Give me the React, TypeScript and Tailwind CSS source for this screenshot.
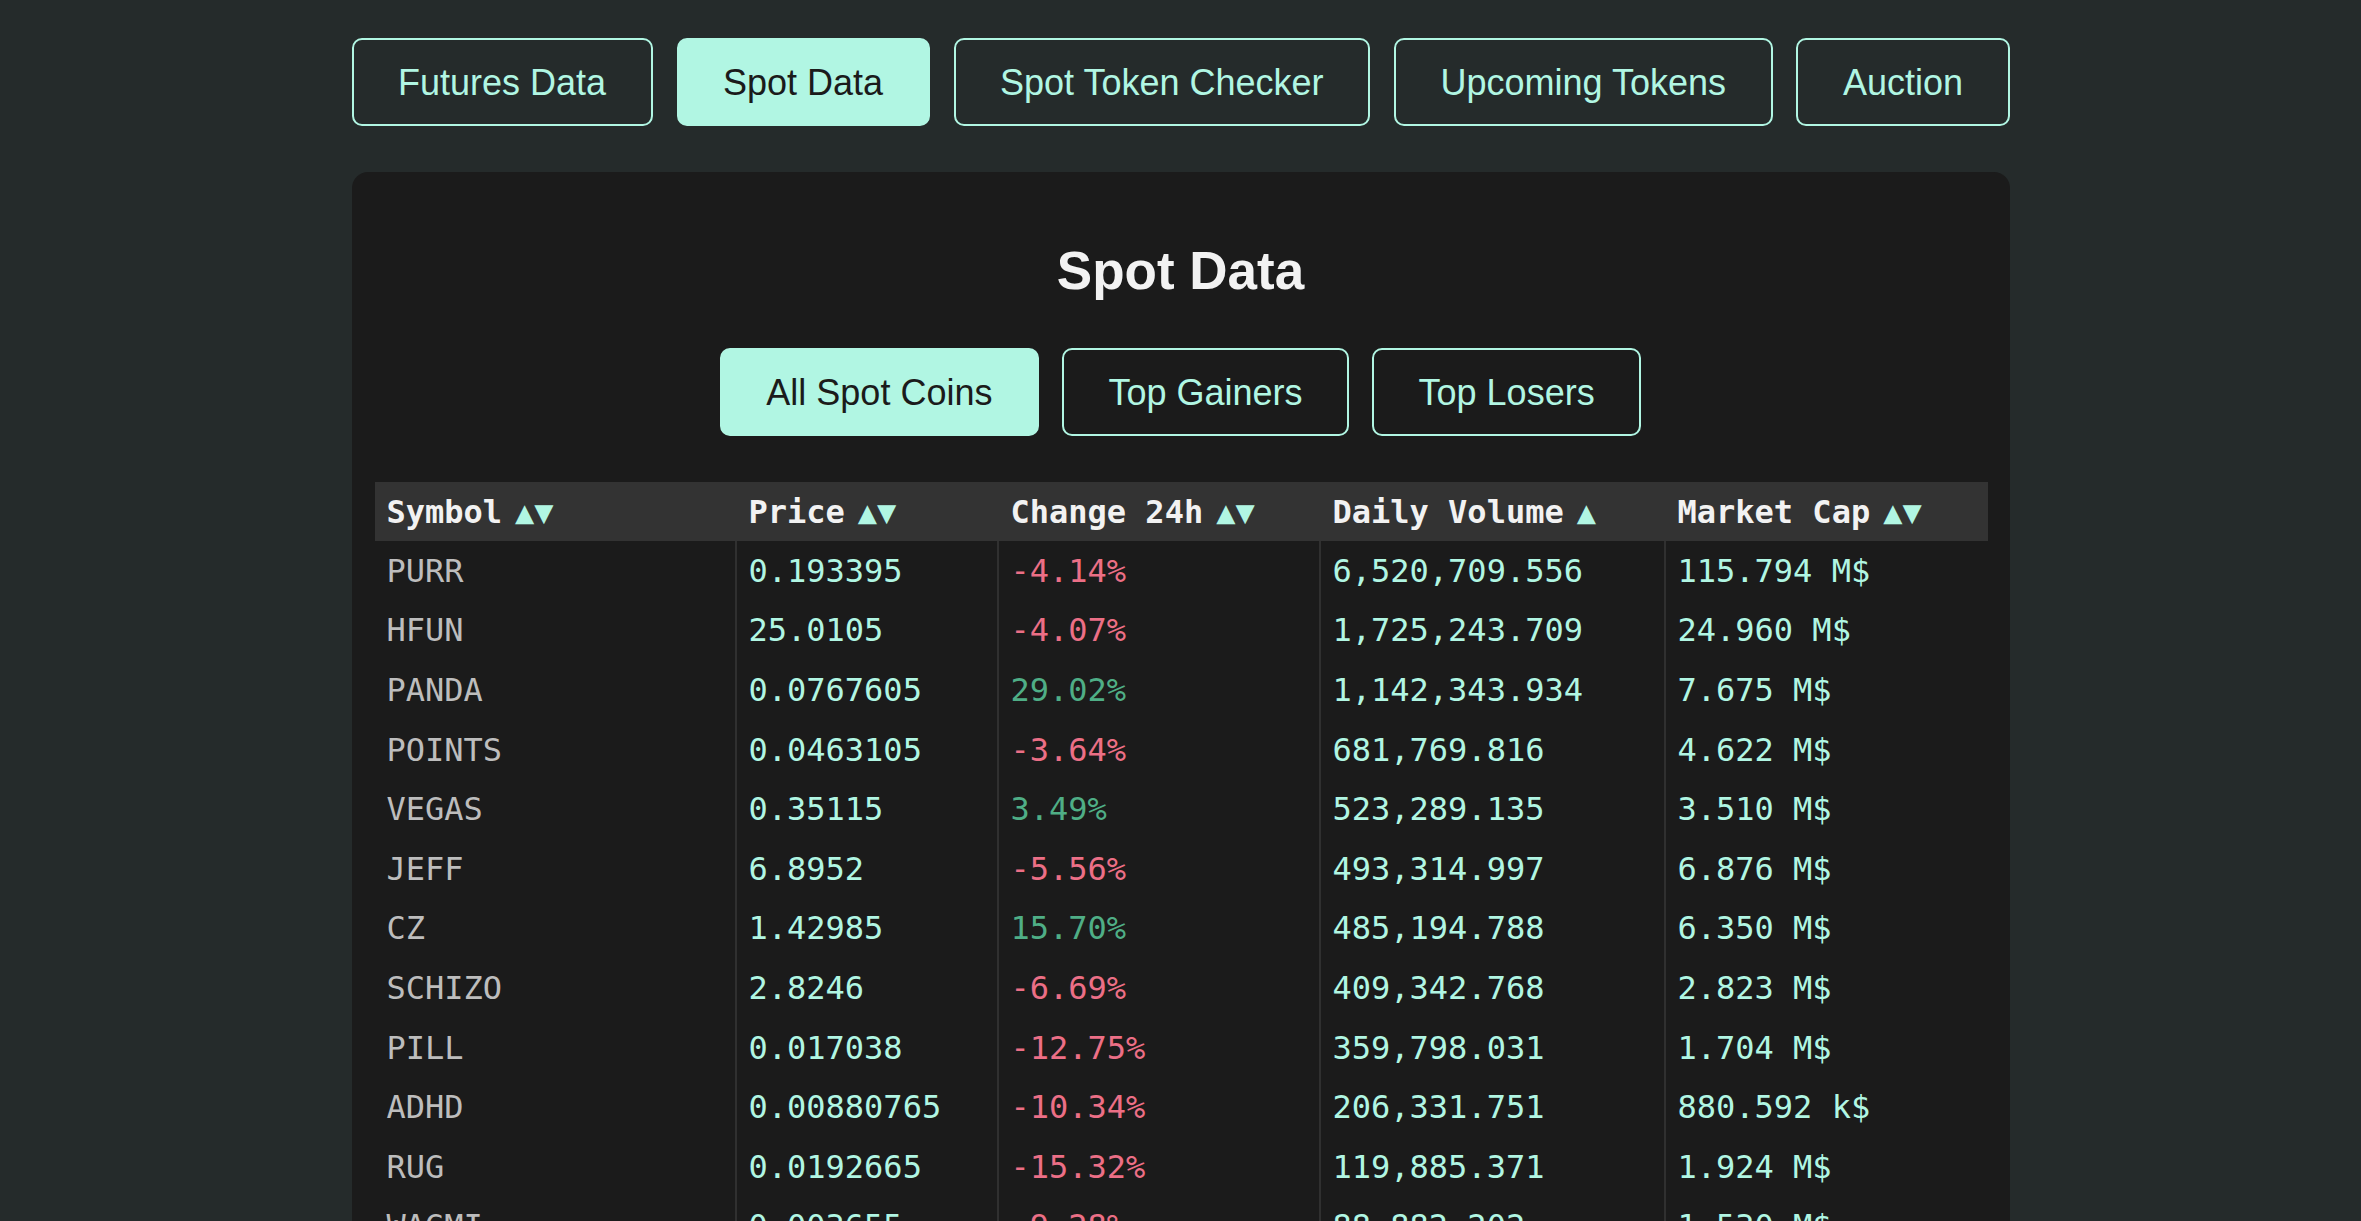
import { useState } from "react";

type Coin = {
  symbol: string;
  price: string;
  change: number;
  volume: string;
  cap: string;
};

const coins: Coin[] = [
  { symbol: "PURR", price: "0.193395", change: -4.14, volume: "6,520,709.556", cap: "115.794 M$" },
  { symbol: "HFUN", price: "25.0105", change: -4.07, volume: "1,725,243.709", cap: "24.960 M$" },
  { symbol: "PANDA", price: "0.0767605", change: 29.02, volume: "1,142,343.934", cap: "7.675 M$" },
  { symbol: "POINTS", price: "0.0463105", change: -3.64, volume: "681,769.816", cap: "4.622 M$" },
  { symbol: "VEGAS", price: "0.35115", change: 3.49, volume: "523,289.135", cap: "3.510 M$" },
  { symbol: "JEFF", price: "6.8952", change: -5.56, volume: "493,314.997", cap: "6.876 M$" },
  { symbol: "CZ", price: "1.42985", change: 15.7, volume: "485,194.788", cap: "6.350 M$" },
  { symbol: "SCHIZO", price: "2.8246", change: -6.69, volume: "409,342.768", cap: "2.823 M$" },
  { symbol: "PILL", price: "0.017038", change: -12.75, volume: "359,798.031", cap: "1.704 M$" },
  { symbol: "ADHD", price: "0.00880765", change: -10.34, volume: "206,331.751", cap: "880.592 k$" },
  { symbol: "RUG", price: "0.0192665", change: -15.32, volume: "119,885.371", cap: "1.924 M$" },
  { symbol: "WAGMI", price: "0.003655", change: -9.28, volume: "88,882.202", cap: "1.530 M$" },
  { symbol: "FRIED", price: "0.0121135", change: -2.81, volume: "71,420.115", cap: "1.211 M$" },
  { symbol: "MOON", price: "0.0581", change: 1.94, volume: "64,210.902", cap: "958.117 k$" },
];

const navItems = ["Futures Data", "Spot Data", "Spot Token Checker", "Upcoming Tokens", "Auction"];
const filters = ["All Spot Coins", "Top Gainers", "Top Losers"];

function PillButton({ label, active, onClick }: { label: string; active: boolean; onClick: () => void }) {
  return (
    <button
      onClick={onClick}
      className={
        active
          ? "h-[88px] px-[44.5px] rounded-[10px] border-2 border-[#b1f6e3] bg-[#b1f6e3] text-[#1b1b1b] text-[36px] leading-[41px]"
          : "h-[88px] px-[44.5px] rounded-[10px] border-2 border-[#b1f6e3] bg-transparent text-[#b1f6e3] text-[36px] leading-[41px]"
      }
    >
      {label}
    </button>
  );
}

function SortHead({ label, arrows }: { label: string; arrows: string }) {
  return (
    <span>
      {label}
      <span className="ml-[13px] text-[#b1f6e3]">{arrows}</span>
    </span>
  );
}

export default function App() {
  const [tab, setTab] = useState("Spot Data");
  const [filter, setFilter] = useState("All Spot Coins");

  const cell = "h-[59.6px] px-[12px] py-0 align-middle whitespace-nowrap";

  return (
    <div className="min-h-screen bg-[#252b2b] font-['Liberation_Sans',Arial,sans-serif]">
      <div className="w-[1658px] mx-auto pt-[38px] pb-10">
        {/* Top navigation */}
        <nav className="flex justify-between">
          {navItems.map((n) => (
            <PillButton key={n} label={n} active={tab === n} onClick={() => setTab(n)} />
          ))}
        </nav>

        {/* Card */}
        <div className="mt-[46px] bg-[#1b1b1b] rounded-[16px] px-[23px] pt-[68px] pb-[23px]">
          <h2 className="text-center text-[53px] leading-[61px] font-bold text-[#f2f2f2]">Spot Data</h2>

          <div className="mt-[47px] flex justify-center gap-[23px]">
            {filters.map((f) => (
              <PillButton key={f} label={f} active={filter === f} onClick={() => setFilter(f)} />
            ))}
          </div>

          <table className="mt-[46px] w-full table-fixed border-collapse font-['DejaVu_Sans_Mono',monospace] text-[32px] leading-[38px]">
            <colgroup>
              <col className="w-[361px]" />
              <col className="w-[262px]" />
              <col className="w-[322px]" />
              <col className="w-[345px]" />
              <col className="w-[323px]" />
            </colgroup>
            <thead>
              <tr className="bg-[#333333] text-[#f2f2f2] text-left">
                <th className={`${cell} font-bold h-[59px]`}>
                  <SortHead label="Symbol" arrows="▲▼" />
                </th>
                <th className={`${cell} font-bold h-[59px] border-l-2 border-[#333333]`}>
                  <SortHead label="Price" arrows="▲▼" />
                </th>
                <th className={`${cell} font-bold h-[59px] border-l-2 border-[#333333]`}>
                  <SortHead label="Change 24h" arrows="▲▼" />
                </th>
                <th className={`${cell} font-bold h-[59px] border-l-2 border-[#333333]`}>
                  <SortHead label="Daily Volume" arrows="▲" />
                </th>
                <th className={`${cell} font-bold h-[59px] border-l-2 border-[#333333]`}>
                  <SortHead label="Market Cap" arrows="▲▼" />
                </th>
              </tr>
            </thead>
            <tbody>
              {coins.map((c) => (
                <tr key={c.symbol}>
                  <td className={`${cell} text-[#bdbdbd]`}>{c.symbol}</td>
                  <td className={`${cell} text-[#b1f6e3] border-l-2 border-[#303030]`}>{c.price}</td>
                  <td
                    className={`${cell} border-l-2 border-[#303030] ${
                      c.change < 0 ? "text-[#ec6f86]" : "text-[#4fae86]"
                    }`}
                  >
                    {c.change.toFixed(2)}%
                  </td>
                  <td className={`${cell} text-[#b1f6e3] border-l-2 border-[#303030]`}>{c.volume}</td>
                  <td className={`${cell} text-[#b1f6e3] border-l-2 border-[#303030]`}>{c.cap}</td>
                </tr>
              ))}
            </tbody>
          </table>
        </div>
      </div>
    </div>
  );
}
